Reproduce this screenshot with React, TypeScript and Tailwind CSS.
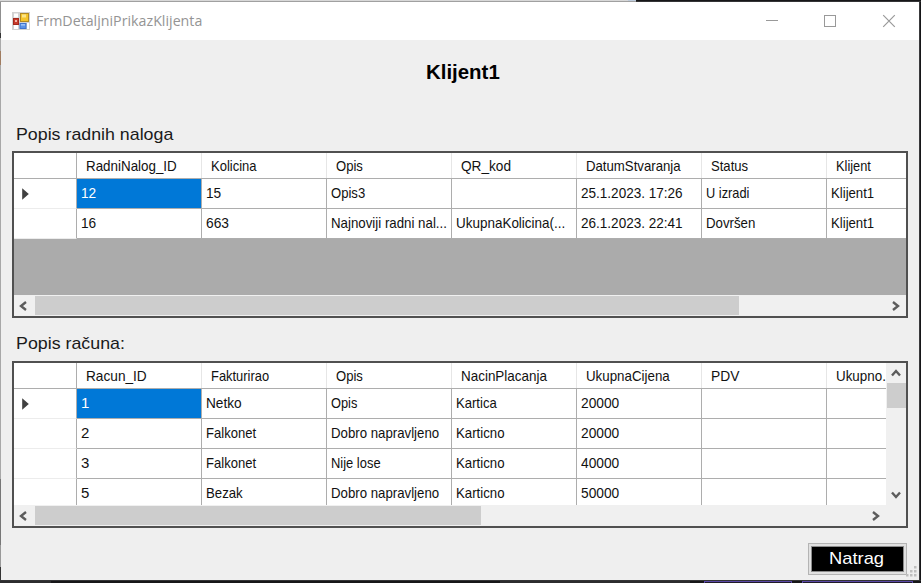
import { useLayoutEffect, useRef, useState } from "react";

type Label = [text: string, width: number];

/* Text condensed horizontally to a given width, like the GDI bitmap fonts. */
function Fit({ text, width, className = "" }: { text: string; width: number; className?: string }) {
  const ref = useRef<HTMLSpanElement>(null);
  const [scale, setScale] = useState(1);
  useLayoutEffect(() => {
    if (ref.current) setScale(width / ref.current.offsetWidth);
  }, [text, width]);
  return (
    <span
      ref={ref}
      className={`inline-block shrink-0 origin-left whitespace-pre ${className}`}
      style={{ transform: `scaleX(${scale})` }}
    >
      {text}
    </span>
  );
}

function Chevron({ dir }: { dir: "left" | "right" | "up" | "down" }) {
  const d = {
    left: "M8 1 L3 5 L8 9",
    right: "M2 1 L7 5 L2 9",
    up: "M1 7.5 L5 3 L9 7.5",
    down: "M1 2.5 L5 7 L9 2.5",
  }[dir];
  return (
    <svg width="10" height="10" viewBox="0 0 10 10" className="block shrink-0">
      <path d={d} fill="none" stroke="#5c5c5c" strokeWidth="2.4" />
    </svg>
  );
}

function Grid({ headers, rows, vertical = false }: { headers: Label[]; rows: Label[][]; vertical?: boolean }) {
  return (
    <section className="flex h-[167px] w-[896px] flex-col border-2 border-[#505050] bg-[#ababab] text-[15px] leading-[18px] text-[#111]">
      <div className="flex h-[142px] overflow-hidden">
        <div className="min-w-0 flex-1 overflow-hidden">
          <div className="flex h-[26px] w-[938px] border-b border-[#adadad] bg-white">
            <div className="w-[63px] shrink-0 border-r border-[#adadad]" />
            {headers.map(([text, width], i) => (
              <div key={i} className="flex w-[125px] shrink-0 items-center border-r border-[#e6e6e6] pl-[9px]">
                <Fit text={text} width={width} />
              </div>
            ))}
          </div>
          {rows.map((row, r) => (
            <div key={r} className="flex h-[30px] w-[938px] bg-white">
              <div className="flex w-[63px] shrink-0 items-center border-r border-b border-r-[#adadad] border-b-[#ececec] pl-[8px]">
                {r === 0 && (
                  <svg width="7" height="12" viewBox="0 0 7 12">
                    <path d="M0.2 0.2 L6.8 6 L0.2 11.8 Z" fill="#404040" />
                  </svg>
                )}
              </div>
              {row.map(([text, width], c) => (
                <div
                  key={c}
                  className={`flex w-[125px] shrink-0 items-center border-r border-b border-[#adadad] pb-px pl-[4px] ${r === 0 && c === 0 ? "bg-[#0078d7] text-white" : ""}`}
                >
                  {text && <Fit text={text} width={width} />}
                </div>
              ))}
            </div>
          ))}
        </div>
        {vertical && (
          <div className="flex w-[20px] shrink-0 flex-col items-center bg-[#f0f0f0]">
            <div className="flex h-[20px] items-center">
              <Chevron dir="up" />
            </div>
            <div className="h-[25px] w-[19px] bg-[#cdcdcd]" />
            <div className="flex-1" />
            <div className="flex h-[20px] items-center">
              <Chevron dir="down" />
            </div>
          </div>
        )}
      </div>
      <div className="flex h-[21px] items-center bg-[#f0f0f0]">
        <div className="flex w-[21px] pl-[4px]">
          <Chevron dir="left" />
        </div>
        <div className={`h-[19px] bg-[#cdcdcd] ${vertical ? "w-[446px]" : "w-[704px]"}`} />
        <div className="flex-1" />
        <div className={`flex w-[21px] justify-center ${vertical ? "mr-[20px]" : ""}`}>
          <Chevron dir="right" />
        </div>
      </div>
    </section>
  );
}

const ordersHeaders: Label[] = [
  ["RadniNalog_ID", 91], ["Kolicina", 46], ["Opis", 27], ["QR_kod", 50],
  ["DatumStvaranja", 95], ["Status", 37.5], ["Klijent", 35],
];
const orders: Label[][] = [
  [["12", 15.5], ["15", 15.5], ["Opis3", 34], ["", 0], ["25.1.2023. 17:26", 102], ["U izradi", 43.5], ["Klijent1", 43]],
  [["16", 15.5], ["663", 23], ["Najnoviji radni nal...", 116], ["UkupnaKolicina(...", 109.5], ["26.1.2023. 22:41", 102], ["Dovršen", 49.5], ["Klijent1", 43]],
];
const billsHeaders: Label[] = [
  ["Racun_ID", 61], ["Fakturirao", 58.5], ["Opis", 27], ["NacinPlacanja", 86],
  ["UkupnaCijena", 83.5], ["PDV", 28.5], ["Ukupno.", 50],
];
const bills: Label[][] = [
  [["1", 8], ["Netko", 35.5], ["Opis", 26.5], ["Kartica", 41], ["20000", 38.5], ["", 0], ["", 0]],
  [["2", 8], ["Falkonet", 50.5], ["Dobro napravljeno", 108.5], ["Karticno", 48.5], ["20000", 38.5], ["", 0], ["", 0]],
  [["3", 8], ["Falkonet", 50.5], ["Nije lose", 50], ["Karticno", 48.5], ["40000", 38.5], ["", 0], ["", 0]],
  [["5", 8], ["Bezak", 37], ["Dobro napravljeno", 108.5], ["Karticno", 48.5], ["50000", 38.5], ["", 0], ["", 0]],
];

function AppIcon() {
  return (
    <svg width="18" height="18" viewBox="0 0 18 18" className="block shrink-0">
      <rect width="18" height="18" fill="#d2d2d2" />
      <rect x="2" y="1.5" width="4" height="4" fill="#fff" />
      <rect x="2" y="13" width="4" height="4" fill="#fff" />
      <rect x="8.5" y="1.5" width="8" height="8" fill="#f5c52c" stroke="#b18a24" />
      <rect x="10" y="2.5" width="4" height="3" fill="#fbe58a" />
      <rect x="1.5" y="6.5" width="5" height="6" fill="#c73b2c" stroke="#a3271c" />
      <rect x="3" y="8" width="2" height="2" fill="#f2b4a8" />
      <rect x="8" y="11.5" width="6" height="5" fill="#5b92e8" stroke="#3f74cf" />
      <rect x="9" y="12" width="4" height="1.6" fill="#9bc0f7" />
      <rect x="15" y="11" width="2" height="6" fill="#fff" />
    </svg>
  );
}

export default function App() {
  return (
    <div className="flex h-[583px] w-[921px] flex-col overflow-hidden bg-[#161618] font-['Liberation_Sans',Arial,sans-serif]">
      <div className="flex h-px shrink-0">
        <div className="w-[628px] bg-[#d8d8d8]" />
        <div className="w-[8px] bg-[#bdcbdc]" />
      </div>
      <div className="flex h-px shrink-0">
        <div className="w-[636px] bg-[#a0a0a0]" />
        <div className="flex-1 bg-[#343436]" />
      </div>
      <div className="flex h-[578px] shrink-0">
        <div className="flex w-px flex-col bg-[#a8a8a8]">
          <div className="h-[31px] bg-[#8f8f8f]" />
          <div className="h-[5px] bg-[#333]" />
          <div className="h-[13px] bg-[#aaa]" />
          <div className="h-[14px] bg-[#a07c60]" />
          <div className="flex-1" />
          <div className="h-[66px] bg-[#777]" />
          <div className="h-[22px] bg-[#999]" />
          <div className="h-[13px] bg-[#333]" />
        </div>
        <main className="flex w-[918px] flex-col bg-[#efefef]">
          <header className="flex h-[38px] shrink-0 items-center bg-white pl-[11px] text-[#949494]">
            <AppIcon />
            <Fit
              text="FrmDetaljniPrikazKlijenta"
              width={166}
              className="ml-[6px] pb-[2px] font-['Open_Sans',sans-serif] text-[15px] leading-[20px]"
            />
            <div className="flex-1" />
            <svg width="130" height="14" viewBox="0 0 130 14" className="mr-[23px] block shrink-0" fill="none" stroke="#999">
              <path d="M0 6.5 H12" />
              <rect x="58.5" y="1.5" width="11" height="11" />
              <path d="M117.2 1.2 L128.8 12.8 M128.8 1.2 L117.2 12.8" strokeWidth="1.2" />
            </svg>
          </header>
          <h1 className="mt-[19px] ml-[425px] flex h-[26px] items-center text-[20px] font-bold text-black">
            <Fit text="Klijent1" width={73.5} />
          </h1>
          <h2 className="mt-[39px] ml-[15px] flex h-[22px] items-center text-[17px] leading-[22px] text-[#1a1a1a]">
            <Fit text="Popis radnih naloga" width={157} />
          </h2>
          <div className="mt-[5px] ml-[11px]">
            <Grid headers={ordersHeaders} rows={orders} />
          </div>
          <h2 className="mt-[15px] ml-[15px] flex h-[22px] items-center text-[17px] leading-[22px] text-[#1a1a1a]">
            <Fit text="Popis računa:" width={109} />
          </h2>
          <div className="mt-[6px] ml-[11px]">
            <Grid headers={billsHeaders} rows={bills} vertical />
          </div>
          <footer className="flex h-[52px] items-start justify-end pt-[14px]">
            <button className="mt-px flex h-[32px] w-[99px] items-center border border-[#b4b4b4] bg-[#e1e1e1] p-[2px]">
              <span className="flex h-full w-full items-center border border-[#8c8c8c] bg-black pl-[17px] text-[17px] leading-[22px] text-white">
                <Fit text="Natrag" width={55} />
              </span>
            </button>
            <svg width="12" height="12" viewBox="0 0 12 12" className="mt-[24px] mr-[1px] -ml-px block" fill="#bfbfbf">
              <rect x="8" y="0" width="2.5" height="2.5" />
              <rect x="4" y="4" width="2.5" height="2.5" />
              <rect x="8" y="4" width="2.5" height="2.5" />
              <rect x="0" y="8" width="2.5" height="2.5" />
              <rect x="4" y="8" width="2.5" height="2.5" />
              <rect x="8" y="8" width="2.5" height="2.5" />
            </svg>
          </footer>
        </main>
        <div className="w-px bg-[#3a3a3c]" />
      </div>
      <div className="h-px shrink-0 bg-[#343436]" />
      <div className="flex h-[2px] shrink-0">
        <div className="w-[51px] bg-[#2c2c2e]" />
        <div className="w-[449px]" />
        <div className="w-[190px] bg-[#2c2c2e]" />
        <div className="w-[14px]" />
        <div className="w-[88px] border-x border-t border-[#5a48a8] bg-[#201c28]" />
        <div className="w-[10px]" />
        <div className="w-[111px] border-x border-t border-[#5a48a8] bg-[#201c28]" />
      </div>
    </div>
  );
}
